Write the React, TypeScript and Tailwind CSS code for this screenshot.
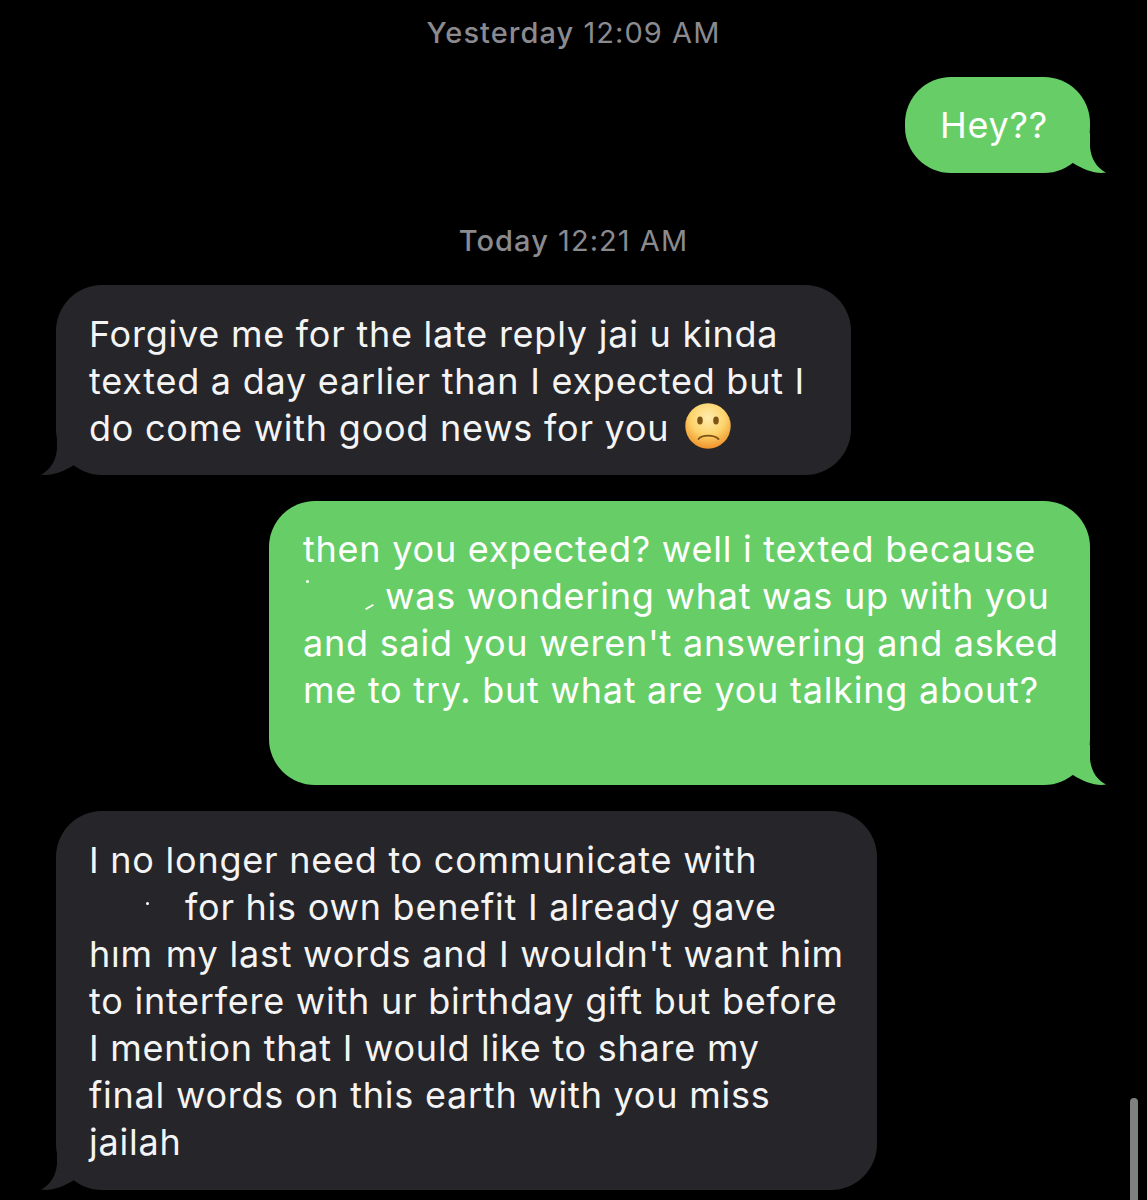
import React from 'react';

const GREEN = 'bg-[#67ce67]';
const DARK = 'bg-[#262529]';

const Tail = ({ side }: { side: 'left' | 'right' }) => (
  <svg
    viewBox="0 0 60 40"
    className={`absolute bottom-0 w-[60px] h-[40px] ${side === 'right' ? 'right-[-16px] text-[#67ce67]' : 'left-[-15px] -scale-x-100 text-[#262529]'}`}
  >
    <path d="M42 0 L44 0 L44 14 C45 26 51 35 60 39.6 C49 41 38 37 27 30 L20 18 Z" fill="currentColor" />
  </svg>
);

const Time = ({ day, time, className }: { day: string; time: string; className: string }) => (
  <div className={`h-[38px] leading-[38px] text-center text-[#8a8a8f] text-[29px] tracking-[1.05px] ${className}`}>
    <span className="font-medium">{day}</span> {time}
  </div>
);

const Frown = () => (
  <svg viewBox="0 0 46 46" className="inline-block w-[46px] h-[46px] align-[-11px] ml-[16px] -translate-y-[3px]">
    <defs>
      <radialGradient id="face" cx="50%" cy="32%" r="68%">
        <stop offset="0%" stopColor="#ffecae" />
        <stop offset="55%" stopColor="#fdd46c" />
        <stop offset="100%" stopColor="#ef932a" />
      </radialGradient>
    </defs>
    <circle cx="23" cy="23" r="22.7" fill="url(#face)" />
    <ellipse cx="15" cy="17.5" rx="2.8" ry="4" fill="#7f5315" />
    <ellipse cx="31" cy="17.5" rx="2.8" ry="4" fill="#7f5315" />
    <path d="M13.5 36 C17 31.5 29 31.5 33.5 36" stroke="#7f5315" strokeWidth="1.8" fill="none" strokeLinecap="round" />
  </svg>
);

export default function App() {
  return (
    <div className="relative h-[1200px] w-[1147px] overflow-hidden bg-black font-['Inter',sans-serif] text-[36px] leading-[47px] tracking-[0.76px]">
      <div className="flex flex-col pt-[14px]">
        <Time day="Yesterday" time="12:09 AM" className="" />

        <div className={`relative self-end mr-[57px] mt-[25px] w-[185px] h-[96px] rounded-[46px] pl-[35px] pt-[25px] text-white ${GREEN}`}>
          Hey??
          <Tail side="right" />
        </div>

        <Time day="Today" time="12:21 AM" className="mt-[49px]" />

        <div className={`relative ml-[56px] mt-[25px] w-[795px] h-[190px] rounded-[46px] pl-[33px] pt-[26px] text-[#f4f4f5] whitespace-nowrap ${DARK}`}>
          <div>Forgive me for the late reply jai u kinda</div>
          <div>texted a day earlier than I expected but I</div>
          <div>do come with good news for you<Frown /></div>
          <Tail side="left" />
        </div>

        <div className={`relative self-end mr-[57px] mt-[26px] w-[821px] h-[284px] rounded-[46px] pl-[34px] pt-[25px] text-white whitespace-nowrap ${GREEN}`}>
          <div>then you expected? well i texted because</div>
          <div>
            <span className="inline-block ml-[3px] w-[3px] h-[3px] rounded-full bg-white align-[26px]" />
            <span className="inline-block ml-[56px] w-[9px] h-[2px] -rotate-[30deg] bg-white align-[1px]" />
            <span className="ml-[11px]">was wondering what was up with you</span>
          </div>
          <div>and said you weren't answering and asked</div>
          <div>me to try. but what are you talking about?</div>
          <Tail side="right" />
        </div>

        <div className={`relative ml-[56px] mt-[26px] w-[821px] h-[379px] rounded-[46px] pl-[33px] pt-[26px] text-[#f4f4f5] whitespace-nowrap ${DARK}`}>
          <div>I no longer need to communicate with</div>
          <div>
            <span className="inline-block ml-[57px] w-[3px] h-[3px] rounded-full bg-white align-[15px]" />
            <span className="ml-[36px]">for his own benefit I already gave</span>
          </div>
          <div>
            <span>hım</span>
            <span className="pl-[13px]">my last words and I wouldn't want him</span>
          </div>
          <div>to interfere with ur birthday gift but before</div>
          <div>I mention that I would like to share my</div>
          <div>final words on this earth with you miss</div>
          <div>jailah</div>
          <Tail side="left" />
        </div>
      </div>

      <div className="absolute left-[1130px] top-[1098px] h-[110px] w-[8px] rounded-full bg-[#808080]" />
    </div>
  );
}
